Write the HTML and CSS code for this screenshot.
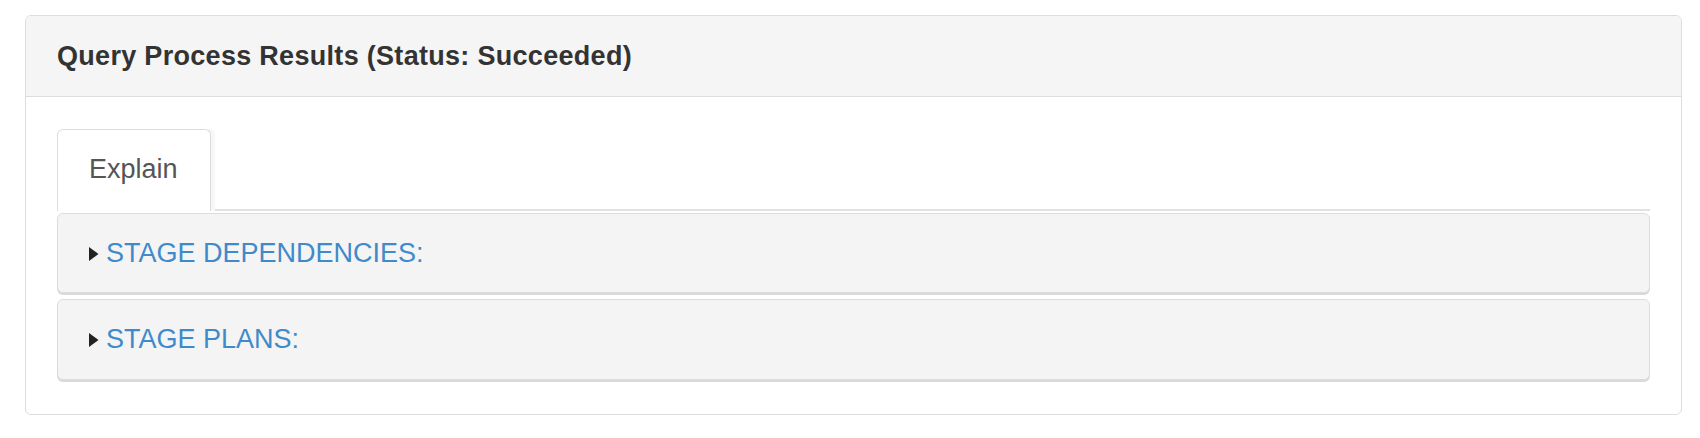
FILE: index.html
```html
<!DOCTYPE html>
<html>
<head>
<meta charset="utf-8">
<link rel="stylesheet" href="styles.css">
</head>
<body>
<div class="panel">
  <div class="panel-heading">
    <h3 class="panel-title">Query Process Results (Status: Succeeded)</h3>
  </div>
  <div class="panel-body">
    <ul class="nav-tabs">
      <li class="tab active">Explain</li>
    </ul>
    <div class="tab-content">
      <div class="row-panel">
        <svg class="caret" width="11" height="16" viewBox="0 0 11 16"><path d="M1 1 L10.5 8 L1 15 Z" fill="#222"/></svg>
        <a class="row-link">STAGE DEPENDENCIES:</a>
      </div>
      <div class="row-panel row-tall">
        <svg class="caret" width="11" height="16" viewBox="0 0 11 16"><path d="M1 1 L10.5 8 L1 15 Z" fill="#222"/></svg>
        <a class="row-link">STAGE PLANS:</a>
      </div>
    </div>
  </div>
</div>
</body>
</html>
```

FILE: styles.css
```css
html, body {
  margin: 0;
  padding: 0;
  background: #fff;
  font-family: "Liberation Sans", Arial, sans-serif;
}

.panel {
  margin: 15px 0 0 25px;
  width: 1657px;
  box-sizing: border-box;
  border: 1px solid #ddd;
  border-radius: 6px;
  background: #fff;
  overflow: hidden;
}

.panel-heading {
  height: 81px;
  box-sizing: border-box;
  background: #f5f5f5;
  border-bottom: 1px solid #ddd;
  display: flex;
  align-items: center;
  padding: 0 31px 0 31px;
}

.panel-title {
  margin: 0;
  font-size: 27px;
  font-weight: bold;
  letter-spacing: 0.3px;
  color: #333;
}

.panel-body {
  padding: 32px 31px 34px 31px;
}

.nav-tabs {
  list-style: none;
  margin: 0;
  padding: 0;
  display: flex;
  border-bottom: 2px solid #e2e2e2;
}

.tab {
  height: 82px;
  box-sizing: border-box;
  margin-bottom: -2px;
  padding: 0 32px 2px 31px;
  display: flex;
  align-items: center;
  border: 1px solid #ddd;
  border-bottom: none;
  border-radius: 6px 6px 0 0;
  background: #fff;
  font-size: 27px;
  color: #555;
  box-shadow: 4px 0 0 #f7f7f7;
}

.tab-content {
  padding-top: 2px;
  display: flex;
  flex-direction: column;
  gap: 6px;
}

.row-panel {
  height: 80px;
  box-sizing: border-box;
  background: #f4f4f4;
  border: 1px solid #dcdcdc;
  border-radius: 6px;
  box-shadow: 0 2px 0 #dadada;
  display: flex;
  align-items: center;
  padding-left: 30px;
}

.row-tall {
  height: 81px;
}

.caret {
  display: block;
  margin-right: 7px;
  margin-top: 1px;
}

.row-link {
  font-size: 27px;
  color: #3f8acb;
  text-decoration: none;
}
```
